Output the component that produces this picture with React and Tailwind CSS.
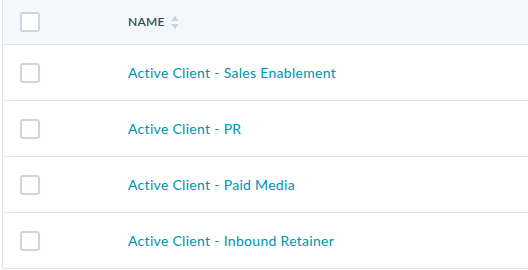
import React from "react";

const rows = [
  "Active Client - Sales Enablement",
  "Active Client - PR",
  "Active Client - Paid Media",
  "Active Client - Inbound Retainer",
];

const Checkbox = () => (
  <div className="w-5 h-5 rounded-[3px] border-2 border-[#cbd6e2] bg-white" />
);

const SortIcon = () => (
  <svg width="8" height="13" viewBox="0 0 8 13" className="ml-1.5">
    <path d="M4 0 L8 5 L0 5 Z" fill="#cbd6e2" />
    <path d="M4 13 L8 8 L0 8 Z" fill="#cbd6e2" />
  </svg>
);

const App = () => {
  return (
    <div
      className="w-[528px] h-[270px] bg-white overflow-hidden pl-[2px]"
      style={{ fontFamily: "Lato, 'Open Sans', sans-serif" }}
    >
      <div className="border-l border-[#dfe3eb]">
        {/* Header */}
        <div className="flex items-center h-[45px] bg-[#f5f8fa] border-b border-[#dfe3eb]">
          <div className="w-[125px] pl-[17px] flex items-center">
            <Checkbox />
          </div>
          <div className="flex items-center text-[12px] font-semibold text-[#33475b] tracking-[0.02em]">
            NAME
            <SortIcon />
          </div>
        </div>

        {/* Rows */}
        {rows.map((name) => (
          <div
            key={name}
            className="flex items-center h-[56px] border-b border-[#dfe3eb]"
          >
            <div className="w-[125px] pl-[17px] flex items-center">
              <Checkbox />
            </div>
            <a className="text-[14px] tracking-[0.3px] text-[#0091ae]">{name}</a>
          </div>
        ))}
      </div>
    </div>
  );
};

export default App;
